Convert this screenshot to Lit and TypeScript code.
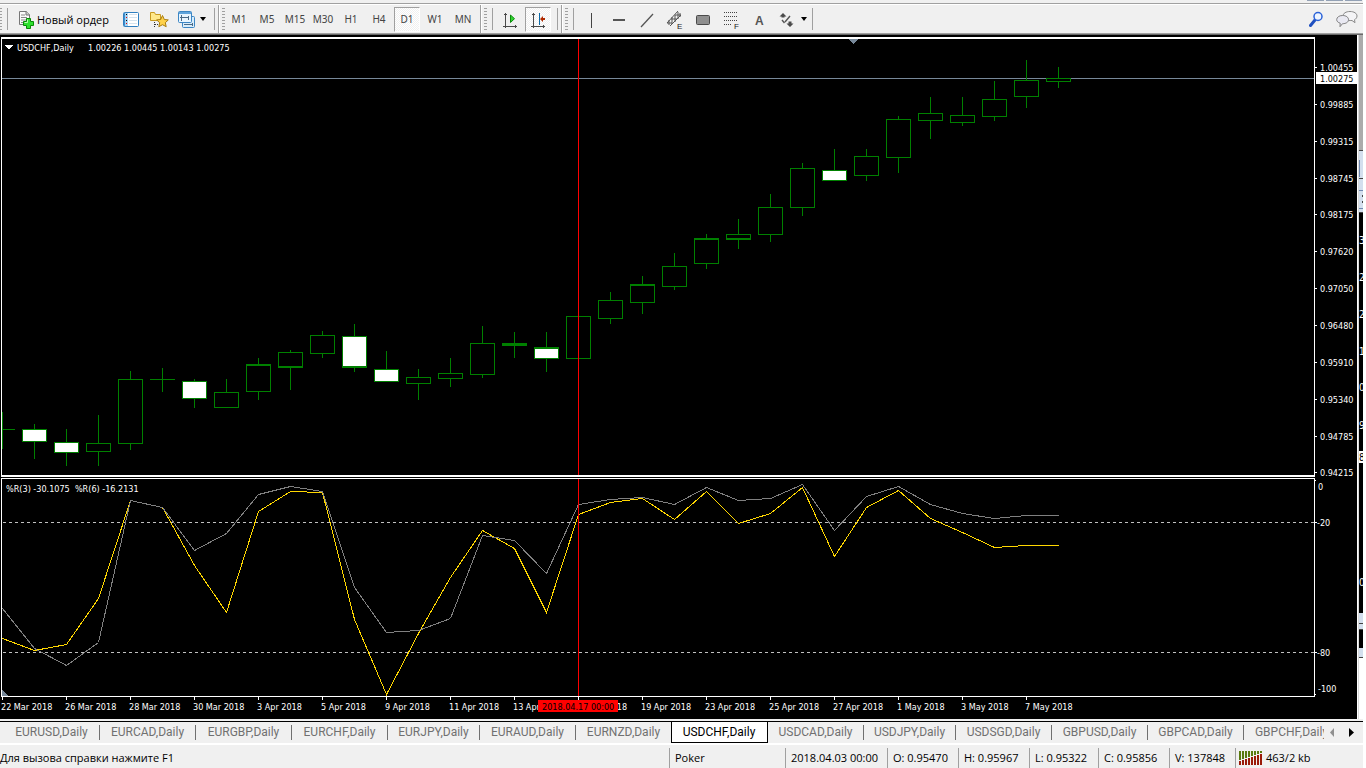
import { LitElement, html, svg, css } from "lit";
import { customElement, property, state } from "lit/decorators.js";
import { classMap } from "lit/directives/class-map.js";

// open-ended list of bars: high, low, body top, body bottom, style flags
// f = filled (bearish), t = thick top edge, b = thick bottom edge
type Bar = [number, number, number, number, string?];

const STEP = 32;
const FIRST = 2;
const PRICE_TOP = 37;
const OSC_TOP = 478;

const BARS: Bar[] = [
  [412, 448, 429, 429], [424, 458, 429, 441, "f"], [429, 465, 442, 452, "f"], [415, 465, 443, 451],
  [371, 449, 379, 443], [368, 391, 379, 379], [379, 407, 381, 398, "f"], [379, 407, 392, 407],
  [358, 399, 364, 391, "t"], [350, 389, 352, 367, "b"], [331, 357, 335, 353], [324, 371, 336, 367, "fb"],
  [351, 381, 369, 381, "f"], [369, 399, 377, 383], [358, 386, 373, 378], [326, 377, 343, 374],
  [332, 357, 343, 345, "t"], [332, 371, 347, 358, "ft"], [316, 358, 316, 358], [292, 323, 300, 318],
  [276, 313, 284, 302, "t"], [253, 289, 266, 286], [234, 268, 238, 263, "t"], [219, 248, 234, 239, "b"],
  [194, 241, 207, 234], [163, 215, 168, 207], [149, 180, 170, 180, "f"], [149, 180, 156, 175],
  [116, 172, 119, 157], [97, 138, 113, 120], [97, 125, 115, 122], [81, 120, 99, 116],
  [60, 107, 80, 96], [67, 87, 78, 81],
];

const R3 = [638, 650, 644, 598, 500, 507, 565, 612, 511, 491, 492, 619, 694, 633, 577, 530, 548, 612, 514, 502, 498, 519, 491, 523, 513, 487, 556, 507, 490, 518, 532, 547, 545, 545];
const R6 = [608, 648, 665, 642, 500, 507, 550, 533, 494, 486, 491, 587, 632, 630, 618, 535, 540, 573, 504, 499, 497, 504, 487, 500, 498, 484, 530, 496, 486, 504, 513, 518, 515, 515];

const PRICES = ["1.00455", "0.99885", "0.99315", "0.98745", "0.98175", "0.97620", "0.97050", "0.96480", "0.95910", "0.95340", "0.94785", "0.94215"];
const DATES = ["22 Mar 2018", "26 Mar 2018", "28 Mar 2018", "30 Mar 2018", "3 Apr 2018", "5 Apr 2018", "9 Apr 2018", "11 Apr 2018", "13 Apr 2018", "17 Apr 2018", "19 Apr 2018", "23 Apr 2018", "25 Apr 2018", "27 Apr 2018", "1 May 2018", "3 May 2018", "7 May 2018"];
const CURSOR_X = 578;

const line = (ys: number[]) => ys.map((y, i) => `${FIRST + i * STEP + 0.5},${y + 0.5}`).join(" ");

@customElement("mt-chart")
class MtChart extends LitElement {
  static styles = css`
    :host { display: block; background: #000; padding-top: 2px; }
    .grid { display: grid; grid-template-columns: minmax(0, 1fr) 42px; }
    .gap { grid-column: 1 / -1; height: 1px; }
    svg { display: block; width: 100%; overflow: hidden; }
    .axis { overflow: visible; }
    .h-price { height: 440px; }
    .h-osc { height: 219px; }
    .h-time { height: 22px; }
    text { font-family: "DejaVu Sans Condensed", "Roboto", sans-serif; font-size: 9px; fill: #fff; white-space: pre; }
    .ink { fill: #000; }
    .crisp { shape-rendering: crispEdges; }
    .frame { fill: #fff; }
    .wick { fill: #008000; }
    .level { stroke: #c0c0c0; stroke-dasharray: 3 3; }
    .curve { fill: none; stroke-width: 1; }
    .r3 { stroke: #ffd700; }
    .r6 { stroke: #808080; }
    .slate { fill: #778899; }
    .red { fill: #f00; }
  `;

  private bar([hi, lo, top, bottom, flags = ""]: Bar, i: number) {
    const x = FIRST + i * STEP;
    return svg`
      <rect class="wick" x=${x} y=${hi} width="1" height=${lo - hi + 1}></rect>
      <rect class="wick" x=${x - 12} y=${top} width="25" height=${bottom - top + 1}></rect>
      ${bottom - top > 1
        ? svg`<rect fill=${flags.includes("f") ? "#fff" : "#000"} x=${x - 11}
            y=${top + (flags.includes("t") ? 2 : 1)} width="23"
            height=${Math.max(0, bottom - top - 1 - (/[tb]/.test(flags) ? 1 : 0))}></rect>`
        : null}`;
  }

  render() {
    return html`
      <div class="grid">
        <svg class="h-price crisp" role="img" aria-label="USDCHF, Daily">
          <g transform="translate(0 ${-PRICE_TOP})">
            <rect class="slate" x="2" y="78" width="100%" height="1"></rect>
            ${BARS.map((b, i) => this.bar(b, i))}
            <rect x="0" y="37" width="1" height="440"></rect>
            <path class="slate" d="M849 39h9v1h-1v1h-1v1h-1v1h-1v1h-1v-1h-1v-1h-1v-1h-1v-1h-1z"></path>
            <path class="frame" d="M5 45h8l-4 5z"></path>
            <text x="17" y="51">USDCHF,Daily</text>
            <text x="88" y="51">1.00226 1.00445 1.00143 1.00275</text>
            <rect class="red" x=${CURSOR_X} y="39" width="1" height="436"></rect>
            <rect class="frame" x="1" y="37" width="1" height="440"></rect>
            <rect class="frame" x="1" y="37" width="100%" height="2"></rect>
            <rect class="frame" x="1" y="475" width="100%" height="2"></rect>
          </g>
        </svg>
        <svg class="h-price axis crisp">
          <g transform="translate(0 ${-PRICE_TOP})">
            <rect class="frame" x="-1" y="37" width="1" height="440"></rect>
            ${PRICES.map((p, i) => {
              const y = 67 + Math.round(i * 36.86);
              return svg`<rect class="frame" x="0" y=${y} width="2" height="1"></rect>
                <text x="5" y=${y + 4}>${p}</text>`;
            })}
            <rect class="frame" x="1" y="72" width="41" height="12"></rect>
            <text class="ink" x="5" y="82">1.00275</text>
          </g>
        </svg>
        <div class="gap"></div>
        <svg class="h-osc crisp" role="img" aria-label="Williams %R">
          <g transform="translate(0 ${-OSC_TOP})">
            <line class="level" x1="3" x2="100%" y1="522.5" y2="522.5"></line>
            <line class="level" x1="3" x2="100%" y1="652.5" y2="652.5"></line>
            <polyline class="curve r3" points=${line(R3)}></polyline>
            <polyline class="curve r6" points=${line(R6)}></polyline>
            <rect class="red" x=${CURSOR_X} y="479" width="1" height="217"></rect>
            <path class="slate" d="M2 690l6 6h-6z"></path>
            <text x="6" y="492">%R(3) -30.1075  %R(6) -16.2131</text>
            <rect class="frame" x="1" y="478" width="1" height="219"></rect>
            <rect class="frame" x="1" y="478" width="100%" height="1"></rect>
            <rect class="frame" x="1" y="696" width="100%" height="1"></rect>
          </g>
        </svg>
        <svg class="h-osc axis crisp">
          <g transform="translate(0 ${-OSC_TOP})">
            <rect class="frame" x="-1" y="478" width="1" height="219"></rect>
            <rect class="frame" x="0" y="480" width="1" height="1"></rect>
            <rect class="frame" x="0" y="522" width="2" height="1"></rect>
            <rect class="frame" x="0" y="652" width="2" height="1"></rect>
            <rect class="frame" x="0" y="694" width="1" height="1"></rect>
            <text x="3" y="490">0</text>
            <text x="2" y="526">-20</text>
            <text x="2" y="656">-80</text>
            <text x="3" y="692">-100</text>
          </g>
        </svg>
        <svg class="h-time crisp">
          ${DATES.map((d, i) => svg`
            <rect class="frame" x=${FIRST + i * 64} y="0" width="1" height="3"></rect>
            <text x=${1 + i * 64} y="13">${d}</text>`)}
          <rect class="red" x="538" y="3" width="80" height="12"></rect>
          <text class="ink" x="542" y="13">2018.04.17 00:00</text>
        </svg>
      </div>`;
  }
}

const ICONS: Record<string, unknown> = {
  order: svg`
    <path d="M1.500 1.500h7l3 3v10h-10z" fill="#fafafa" stroke="#777"></path>
    <path d="M8 1v4h4" fill="#ccc" stroke="#777"></path>
    <path d="M3 5h4M3 7.500h6M3 10h6M3 12.500h4" stroke="#888"></path>
    <path d="M9.500 9.500h4v3h3v4h-3v3h-4v-3h-3v-4h3z" transform="translate(-1 -1)" fill="#2ee02e" stroke="#078a07"></path>
    <path d="M9.500 9.500v3h-3" fill="none" stroke="#b8ffb0"></path>`,
  watch: svg`
    <rect x="1.500" y="2.500" width="15" height="14" rx="1" fill="#fff" stroke="#2f7fc0"></rect>
    <path d="M2 3h4v13h-4z" fill="#3f8fd0"></path>
    <path d="M3 3h3v13h-3z" fill="#a9d4f2"></path>
    <path d="M4 4h1v1h-1zM4 10h1v1h-1z" fill="#000"></path>
    <path d="M4 7h1v1h-1zM4 13h1v1h-1z" fill="#e00"></path>
    <path d="M7 4.500h8M7 7.500h8M7 10.500h8M7 13.500h8" stroke="#d5e3ee"></path>`,
  navigator: svg`
    <path d="M.5 10.500v-8h4l1 2h5v6z" fill="#ffe88a" stroke="#c89a20"></path>
    <path d="M4.500 12v6M5 14.500h4" stroke="#333" stroke-dasharray="1 1"></path>
    <path d="M12.500 5.500l1.800 4 4 .4-3 2.800.9 4-3.700-2-3.700 2 .9-4-3-2.800 4-.4z" fill="#ffd24a" stroke="#a87c10"></path>`,
  terminal: svg`
    <rect x="4.500" y="6.500" width="12" height="11" rx="1" fill="#d9edfb" stroke="#3c86c4"></rect>
    <rect x=".5" y="1.500" width="13" height="11" rx="1" fill="#e8f5ff" stroke="#3c86c4"></rect>
    <path d="M1 2h12v2h-12z" fill="#5ea4dc"></path>
    <path d="M3.500 5v6M2 7.500h8M10.500 6v4M6 14.500h9M14.500 13v3" fill="none" stroke="#4a6a86"></path>`,
  scroll: svg`
    <path d="M4 3h1v15h-1zM2 16h14v1h-14z" fill="#4a4a4a"></path>
    <path d="M3 4h3v1h-3zM14 15h1v3h-1z" fill="#4a4a4a"></path>
    <path d="M9.500 5v7.500l4-3.800z" fill="#2fd42f" stroke="#0a8a0a"></path>`,
  shift: svg`
    <path d="M4 3h1v15h-1zM2 16h14v1h-14z" fill="#4a4a4a"></path>
    <path d="M3 4h3v1h-3zM14 15h1v3h-1z" fill="#4a4a4a"></path>
    <path d="M10 3h1v12h-1z" fill="#0a6aa8"></path>
    <path d="M11 9l3-3v2h2v2h-2v2z" fill="#b02a00"></path>`,
  vline: svg`<path d="M9 3h1v15h-1z" fill="#444"></path>`,
  hline: svg`<path d="M3 9h12v2h-12z" fill="#555"></path>`,
  trend: svg`<path d="M3 17L15 4" stroke="#555" stroke-width="1.300"></path>`,
  channel: svg`
    <path d="M1 13L12 1M4 16L15 5M3 10v5M6 7v7M9 5v7M12 2v7M14 3v4M1 13h5M5 9h6M9 5h6" stroke="#555"></path>
    <text x="11" y="19">E</text>`,
  shape: svg`<rect x="2.500" y="5.500" width="13" height="9" rx="1" fill="#8f8f8f" stroke="#4a4a4a"></rect>`,
  fibo: svg`
    <path d="M2 2.500h14M2 6.500h14M2 10.500h14M2 14.500h8" stroke="#444" stroke-dasharray="1 1"></path>
    <text x="12" y="19">F</text>`,
  label: svg`<text class="big" x="5" y="15">A</text>`,
  arrows: svg`
    <path d="M5 3l3.500 3.500h-2v1h-3v-1h-2zM12 17l-3.500-3.500h2v-2h3v2h2z" fill="#4a4a4a"></path>
    <path d="M4 10l2.500 3M12 6l-5 6" stroke="#555" stroke-width="1.400"></path>`,
};

@customElement("mt-icon")
class MtIcon extends LitElement {
  @property() name = "";
  static styles = css`
    :host { display: block; width: 18px; height: 18px; flex: none; }
    svg { display: block; overflow: visible; }
    text { font: 8px "Liberation Sans", sans-serif; fill: #222; }
    .big { font: bold 12px "Liberation Sans", sans-serif; fill: #555; }
  `;
  render() {
    return html`<svg width="18" height="18" viewBox="0 0 18 18" fill="none">${ICONS[this.name]}</svg>`;
  }
}

const PERIODS = ["M1", "M5", "M15", "M30", "H1", "H4", "D1", "W1", "MN"];
const TOOLS: [string, string][] = [
  ["vline", "Вертикальная линия"], ["hline", "Горизонтальная линия"], ["trend", "Трендовая линия"],
  ["channel", "Равноудаленный канал"], ["shape", "Прямоугольник"], ["fibo", "Фибоначчи"],
  ["label", "Текст"], ["arrows", "Стрелки"],
];
const TABS = ["EURUSD", "EURCAD", "EURGBP", "EURCHF", "EURJPY", "EURAUD", "EURNZD", "USDCHF", "USDCAD", "USDJPY", "USDSGD", "GBPUSD", "GBPCAD", "GBPCHF"];

// glyphs of the neighbouring window's price scale, cut off by its edge
const BEHIND: [string, number][] = [["3", 244], ["2", 281], ["2", 318], ["1", 355], ["0", 391], ["9", 429], ["0", 586]];

@customElement("app-root")
class AppRoot extends LitElement {
  @state() private period = "D1";
  @state() private tab = "USDCHF";

  static styles = css`
    :host {
      display: block; background: #fff; padding-right: 3px; overflow: hidden;
      font-family: "Open Sans", "Noto Sans", sans-serif; font-size: 11px; color: #000;
    }
    button { font: inherit; color: inherit; border: 0; background: none; padding: 0; margin: 0; display: flex; align-items: center; justify-content: center; }
    .app { display: flex; flex-direction: column; min-height: 100vh; background: #f0f0f0; }
    .caption { height: 3px; display: flex; justify-content: flex-end; gap: 2px; padding-right: 1px; border-bottom: 1px solid #a0a0a0; }
    .caption i { width: 17px; height: 1px; background: #93a1b5; }
    .bar { display: flex; height: 28px; border-top: 1px solid #fff; border-bottom: 1px solid #a0a0a0; align-items: center; }
    .edge { height: 1px; background: #696969; }
    .group { display: flex; align-items: center; height: 28px; padding-right: 3px; }
    .group:last-of-type { padding-right: 0; }
    .group + .group { border-left: 1px solid #a0a0a0; box-shadow: inset 1px 0 #fff; padding-left: 3px; }
    .grip { width: 3px; height: 22px; flex: none; background: repeating-linear-gradient(#a0a0a0 0 1px, #f0f0f0 1px 3px); }
    .grip.cut { width: 2px; }
    .sep { width: 1px; height: 22px; flex: none; background: #a0a0a0; margin: 0 0 0 5px; }
    .order { width: 104px; padding-left: 10px; gap: 3px; justify-content: flex-start; white-space: nowrap; }
    .order mt-icon { width: 16px; }
    .icons { display: flex; gap: 10px; margin-left: 10px; }
    .caret { width: 0; height: 0; border: 3px solid transparent; border-top: 4px solid #000; border-bottom: 0; flex: none; }
    .icons .caret { margin-left: 4px; }
    .end { margin-left: 8px; }
    .tf { width: 26px; height: 25px; margin: 0 1px; box-sizing: border-box; border: 1px solid transparent; color: #444; font-family: "Noto Sans", sans-serif; font-size: 10px; }
    .on { border-color: #a0a0a0 #fff #fff #a0a0a0; background: repeating-conic-gradient(#f0f0f0 0 25%, #fff 0 50%) 0 0 / 2px 2px; }
    .periods { display: flex; }
    .tools { display: flex; margin-left: 3px; }
    .tools .tf { border: 0; }
    .tools .on { border: 1px solid; border-color: #a0a0a0 #fff #fff #a0a0a0; }
    .right { display: flex; margin-left: auto; gap: 12px; padding-right: 5px; }

    .work { display: flex; }
    .work mt-chart { flex: 1; min-width: 0; }
    .rim { width: 2px; background: linear-gradient(90deg, #fff 1px, #d8d8d8 1px); }
    .behind { width: 4px; }
    .behind svg { display: block; width: 4px; height: 684px; overflow: hidden; }
    .behind text { font: 10px "DejaVu Sans Condensed", "Roboto", sans-serif; fill: #fff; }
    .behind .ink { fill: #000; }

    .tabs { display: flex; margin-top: 2px; height: 21px; border-top: 1px solid #000; border-bottom: 2px solid #fff; padding-left: 4px; }
    .strip { display: flex; flex: 1; min-width: 0; overflow: hidden; }
    .tab { width: 96px; flex: none; height: 21px; color: #707070; font: 12px "Roboto", sans-serif; }
    .tab.narrow { width: 92px; }
    .tab span { flex: 1; border-right: 1px solid #707070; line-height: 15px; white-space: nowrap; }
    .tab.active { background: #fff; color: #000; border: 1px solid #000; border-top: 0; width: 97px; margin-left: -1px; box-sizing: border-box; }
    .tab.plain span, .tab.active span { border-color: transparent; }
    .scroll { display: flex; align-items: center; gap: 14px; padding: 0 9px 0 6px; }
    .scroll button { width: 5px; height: 9px; }
    .scroll svg { display: block; }

    .status { display: flex; flex: 1; min-height: 23px; align-items: flex-end; line-height: 20px; white-space: nowrap; }
    .status div { box-sizing: border-box; height: 20px; border-left: 1px solid #a0a0a0; padding-left: 5px; }
    .status .hint { border: 0; padding: 0; flex: 1; }
    .profile { width: 116px; } .time { width: 102px; } .o { width: 71px; } .l { width: 69px; } .v { width: 66px; }
    .status .net { width: 128px; display: flex; align-items: center; gap: 4px; padding-left: 3px; }
  `;

  private tabClass(s: string, i: number) {
    const active = s === this.tab;
    return classMap({ tab: true, active, narrow: s.endsWith("JPY"), plain: TABS[i + 1] === this.tab });
  }

  render() {
    return html`
      <div class="app">
        <div class="caption"><i></i><i></i><i></i></div>
        <div class="bar" role="toolbar">
          <div class="group">
            <span class="grip cut"></span><span class="sep"></span>
            <button class="order"><mt-icon name="order"></mt-icon>Новый ордер</button>
            <div class="icons">
              <button aria-label="Обзор рынка"><mt-icon name="watch"></mt-icon></button>
              <button aria-label="Навигатор"><mt-icon name="navigator"></mt-icon></button>
              <button aria-label="Терминал"><mt-icon name="terminal"></mt-icon><i class="caret"></i></button>
            </div>
            <span class="sep end"></span>
          </div>
          <div class="group">
            <span class="grip"></span>
            <div class="periods">
              ${PERIODS.map((p) => html`<button class=${classMap({ tf: true, on: p === this.period })}
                aria-pressed=${p === this.period} @click=${() => (this.period = p)}>${p}</button>`)}
            </div>
          </div>
          <div class="group">
            <span class="grip"></span><span class="sep"></span>
            <div class="tools">
              <button class="tf" aria-label="Автопрокрутка"><mt-icon name="scroll"></mt-icon></button>
              <button class="tf on" aria-label="Сдвиг графика"><mt-icon name="shift"></mt-icon></button>
            </div>
            <span class="sep"></span>
          </div>
          <div class="group">
            <span class="grip"></span><span class="sep"></span>
            <div class="tools">
              ${TOOLS.map(([n, t]) => html`<button class="tf" aria-label=${t}><mt-icon name=${n}></mt-icon></button>`)}
            </div>
            <i class="caret"></i><span class="sep"></span>
          </div>
          <div class="right">
            <button aria-label="Поиск">
              <svg width="15" height="18" viewBox="0 0 15 18" fill="none">
                <path d="M6 10L1.500 15.500" stroke="#2050c0" stroke-width="3" stroke-linecap="round"></path>
                <circle cx="9" cy="6.500" r="4" fill="#eef5ff" stroke="#2a62d8" stroke-width="1.500"></circle>
              </svg>
            </button>
            <button aria-label="Чат">
              <svg width="22" height="18" viewBox="0 0 22 18">
                <path d="M14 1.500c4 0 7 1.800 7 4.500 0 1.800-1.200 3-2.500 3.700l.5 3-3-2.200c-5 .3-9-1.500-9-4.500 0-2.700 3-4.500 7-4.500z" fill="#f4f4f6" stroke="#8a8a8a"></path>
                <path d="M6.500 5.500c3.500 0 6 1.700 6 4.200s-2.500 4-6 4l-2.500 3 .2-3.500c-2-.6-3.500-1.800-3.500-3.500 0-2.500 2.500-4.200 5.800-4.200z" fill="#e9e9f2" stroke="#808080"></path>
              </svg>
            </button>
          </div>
        </div>
        <div class="edge"></div>
        <div class="work">
          <mt-chart></mt-chart>
          <div class="rim"></div>
          <div class="behind">
            <svg aria-hidden="true">
              <g transform="translate(0 -35)">
                <rect y="35" width="4" height="684" fill="#000"></rect>
                <rect y="33" width="4" height="117" fill="#ababab"></rect>
                <rect y="150" width="4" height="1" fill="#444"></rect>
                <rect y="151" width="4" height="62" fill="#d3dfee"></rect>
                <path d="M0 160h1v17h-1zM0 190h4v1h-4zM0 208h4v1h-4z" fill="#7088b0"></path>
                <path d="M0 178h4v1h-4zM3 195h1v2h-1zM3 201h1v2h-1zM0 212h4v1h-4z" fill="#444"></path>
                ${BEHIND.map(([c, y]) => svg`<text x="0" y=${y}>${c}</text>`)}
                <rect y="451" width="4" height="12" fill="#fff"></rect>
                <text class="ink" x="0" y="461">8</text>
                <rect y="613" width="4" height="17" fill="#d3dfee"></rect>
                <path d="M0 623h4v1h-4zM0 629h4v1h-4z" fill="#444"></path>
                <rect y="648" width="4" height="9" fill="#d3dfee"></rect>
                <rect y="657" width="4" height="1" fill="#444"></rect>
                <rect y="658" width="4" height="61" fill="#fff"></rect>
              </g>
            </svg>
          </div>
        </div>
        <div class="tabs" role="tablist">
          <div class="strip">
            ${TABS.map((s, i) => html`<button role="tab" class=${this.tabClass(s, i)}
              aria-selected=${s === this.tab} @click=${() => (this.tab = s)}><span>${s},Daily</span></button>`)}
          </div>
          <div class="scroll">
            <button aria-label="Назад"><svg width="5" height="9"><path d="M4 0v9L0 4.500z" fill="#909090"></path></svg></button>
            <button aria-label="Вперед"><svg width="5" height="9"><path d="M0 0v9l5-4.500z" fill="#000"></path></svg></button>
          </div>
        </div>
        <div class="status">
          <div class="hint">Для вызова справки нажмите F1</div>
          <div class="profile">Poker</div>
          <div class="time">2018.04.03 00:00</div>
          <div class="o">O: 0.95470</div>
          <div class="o">H: 0.95967</div>
          <div class="l">L: 0.95322</div>
          <div class="o">C: 0.95856</div>
          <div class="v">V: 137848</div>
          <div class="net">
            <svg width="23" height="14" shape-rendering="crispEdges" aria-hidden="true">
              ${[0, 1, 2, 3, 4, 5, 6, 7].map((i) => svg`
                <rect x=${i * 3} y="0" width="2" height=${9 - i} fill="#5a7a10"></rect>
                <rect x=${i * 3} y=${10 - i} width="2" height=${4 + i} fill="#9a1a08"></rect>`)}
            </svg>463/2 kb
          </div>
        </div>
      </div>`;
  }
}
